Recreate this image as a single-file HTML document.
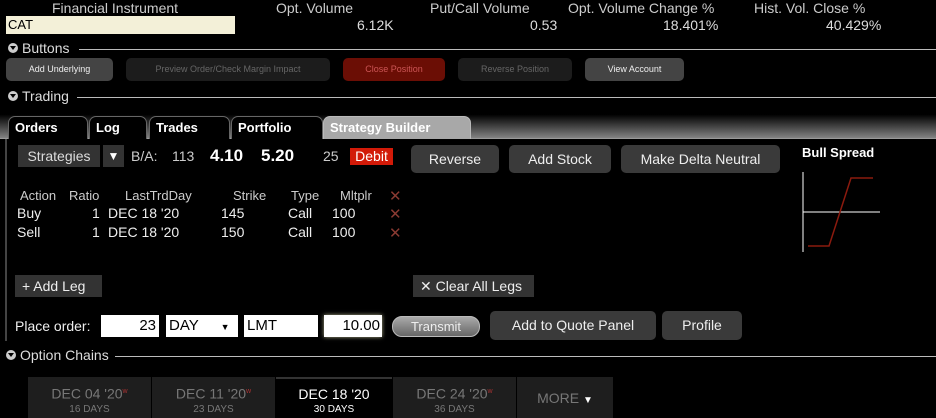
<!DOCTYPE html>
<html><head><style>
*{margin:0;padding:0;box-sizing:border-box}
body{width:936px;height:418px;background:#000;color:#ddd;font-family:"Liberation Sans","DejaVu Sans",sans-serif;position:relative;overflow:hidden}
.a{position:absolute;white-space:nowrap}
.hdr{font-size:14px;color:#ccc;top:0}
.val{font-size:14px;color:#ddd;top:17px}
.sec{font-size:14px;color:#ddd}
.tri{display:inline-block;width:10px;height:10px;border-radius:5px;background:#ccc;position:relative;top:0;margin-right:4px}
.tri:after{content:"";position:absolute;left:2px;top:3px;border-left:3px solid transparent;border-right:3px solid transparent;border-top:4px solid #000}
.line{position:absolute;height:1px;background:#bbb}
.sb{position:absolute;top:58px;height:23px;border-radius:5px;font-size:9px;text-align:center;line-height:23px}
.tab{position:absolute;top:116px;height:23px;border:1px solid #666;border-bottom:none;border-radius:7px 7px 0 0;background:#000;color:#fff;font-weight:bold;font-size:13px;padding-left:6px;line-height:22px}
.btn{position:absolute;background:#3a3a3a;border-radius:5px;color:#eee;font-size:14px;text-align:center}
.hd{font-size:13px;color:#ccc}
.row{font-size:14px;color:#eee}
.x{color:#8a3a32;font-weight:bold;font-size:15px}
.inp{position:absolute;background:#fff;color:#000;font-size:15px;height:22px;line-height:22px;top:315px}
.ct{position:absolute;top:377px;height:41px;background:#1e1e1e;text-align:center;color:#777;font-size:14px;padding-top:8px;line-height:14px}
.ct small{font-size:10px;display:block;margin-top:2px}
.ct sup{color:#a33;font-size:7px}
</style></head><body>
<div class="a hdr" style="left:52px">Financial Instrument</div>
<div class="a hdr" style="left:276px">Opt. Volume</div>
<div class="a hdr" style="left:430px">Put/Call Volume</div>
<div class="a hdr" style="left:568px">Opt. Volume Change %</div>
<div class="a hdr" style="left:754px">Hist. Vol. Close %</div>
<div class="a" style="left:6px;top:16px;width:229px;height:18px;background:#f3f0d8;color:#000;font-size:13px;padding-left:2px;line-height:18px">CAT</div>
<div class="a val" style="left:357px">6.12K</div>
<div class="a val" style="left:530px">0.53</div>
<div class="a val" style="left:663px">18.401%</div>
<div class="a val" style="left:826px">40.429%</div>

<div class="a sec" style="left:8px;top:40px"><span class="tri"></span>Buttons</div>
<div class="line" style="left:79px;right:0;top:49px"></div>
<div class="sb" style="left:6px;width:107px;background:#444;color:#eee">Add Underlying</div>
<div class="sb" style="left:126px;width:204px;background:#1c1c1c;color:#666">Preview Order/Check Margin Impact</div>
<div class="sb" style="left:343px;width:102px;background:#6b0e05;color:#c55">Close Position</div>
<div class="sb" style="left:458px;width:114px;background:#1c1c1c;color:#666">Reverse Position</div>
<div class="sb" style="left:585px;width:99px;background:#444;color:#eee">View Account</div>

<div class="a sec" style="left:8px;top:88px"><span class="tri"></span>Trading</div>
<div class="line" style="left:77px;right:0;top:97px"></div>
<div class="a" style="left:0;right:0;top:104px;height:35px;background:linear-gradient(#000,#000 30%,#888)"></div>
<div class="a" style="left:0;right:0;top:138px;height:1px;background:#999"></div>
<div class="tab" style="left:8px;width:80px">Orders</div>
<div class="tab" style="left:89px;width:58px">Log</div>
<div class="tab" style="left:149px;width:81px">Trades</div>
<div class="tab" style="left:231px;width:92px">Portfolio</div>
<div class="tab" style="left:323px;width:148px;background:#a8a8a8;border-color:#bbb">Strategy Builder</div>
<div class="a" style="left:5px;top:139px;width:2px;height:202px;background:#444"></div>

<div class="a" style="left:18px;top:145px;width:82px;height:22px;background:#333;color:#ddd;font-size:14px;line-height:22px;text-align:center">Strategies</div>
<div class="a" style="left:103px;top:145px;width:21px;height:22px;background:#333;color:#fff;font-size:12px;line-height:22px;text-align:center">▼</div>
<div class="a" style="left:131px;top:148px;font-size:14px;color:#ccc">B/A:</div>
<div class="a" style="left:172px;top:148px;font-size:14px;color:#ccc">113</div>
<div class="a" style="left:210px;top:146px;font-size:17px;color:#fff;font-weight:bold">4.10</div>
<div class="a" style="left:261px;top:146px;font-size:17px;color:#fff;font-weight:bold">5.20</div>
<div class="a" style="left:323px;top:148px;font-size:14px;color:#ccc">25</div>
<div class="a" style="left:350px;top:148px;width:43px;height:17px;background:#d21a08;color:#fff;font-size:14px;line-height:17px;text-align:center">Debit</div>
<div class="btn" style="left:411px;top:145px;width:88px;height:28px;line-height:28px">Reverse</div>
<div class="btn" style="left:509px;top:145px;width:102px;height:28px;line-height:28px">Add Stock</div>
<div class="btn" style="left:621px;top:145px;width:159px;height:28px;line-height:28px">Make Delta Neutral</div>
<div class="a" style="left:802px;top:145px;font-size:13px;font-weight:bold;color:#fff">Bull Spread</div>
<svg class="a" style="left:800px;top:170px" width="82" height="84"><line x1="3" y1="2" x2="3" y2="82" stroke="#fff" stroke-width="1"/><line x1="3" y1="42" x2="80" y2="42" stroke="#fff"/><polyline points="8,76 29,76 51,8 73,8" fill="none" stroke="#8b1a0e" stroke-width="1.5"/></svg>

<div class="a hd" style="left:20px;top:188px">Action</div>
<div class="a hd" style="left:69px;top:188px">Ratio</div>
<div class="a hd" style="left:125px;top:188px">LastTrdDay</div>
<div class="a hd" style="left:233px;top:188px">Strike</div>
<div class="a hd" style="left:291px;top:188px">Type</div>
<div class="a hd" style="left:340px;top:188px">Mltplr</div>
<div class="a x" style="left:389px;top:187px">✕</div>
<div class="a row" style="left:17px;top:205px">Buy</div><div class="a row" style="left:92px;top:205px">1</div><div class="a row" style="left:108px;top:205px">DEC 18 '20</div><div class="a row" style="left:221px;top:205px">145</div><div class="a row" style="left:288px;top:205px">Call</div><div class="a row" style="left:332px;top:205px">100</div><div class="a x" style="left:389px;top:205px">✕</div>
<div class="a row" style="left:17px;top:224px">Sell</div><div class="a row" style="left:92px;top:224px">1</div><div class="a row" style="left:108px;top:224px">DEC 18 '20</div><div class="a row" style="left:221px;top:224px">150</div><div class="a row" style="left:288px;top:224px">Call</div><div class="a row" style="left:332px;top:224px">100</div><div class="a x" style="left:389px;top:224px">✕</div>

<div class="a" style="left:15px;top:275px;width:87px;height:22px;background:#333;color:#eee;font-size:14px;line-height:22px;padding-left:7px">+ Add Leg</div>
<div class="a" style="left:413px;top:275px;width:121px;height:22px;background:#333;color:#eee;font-size:14px;line-height:22px;padding-left:7px">✕ Clear All Legs</div>

<div class="a" style="left:15px;top:318px;font-size:14px;color:#eee">Place order:</div>
<div class="inp" style="left:101px;width:58px;text-align:right;padding-right:3px">23</div>
<div class="inp" style="left:166px;width:72px;padding-left:3px">DAY <span style="font-size:9px;margin-left:18px">▼</span></div>
<div class="inp" style="left:244px;width:74px;padding-left:3px">LMT</div>
<div class="inp" style="left:324px;width:58px;text-align:right;padding-right:2px;box-shadow:0 0 4px #aa8">10.00</div>
<div class="a" style="left:392px;top:316px;width:88px;height:21px;border-radius:10px;background:linear-gradient(#aaa,#666);border:1px solid #bbb;color:#eee;font-size:13px;text-align:center;line-height:19px">Transmit</div>
<div class="btn" style="left:490px;top:311px;width:166px;height:29px;line-height:29px">Add to Quote Panel</div>
<div class="btn" style="left:662px;top:311px;width:80px;height:29px;line-height:29px">Profile</div>

<div class="a sec" style="left:6px;top:347px"><span class="tri"></span>Option Chains</div>
<div class="line" style="left:115px;right:0;top:356px"></div>
<div class="ct" style="left:28px;width:123px">DEC 04 '20<sup>w</sup><small>16 DAYS</small></div>
<div class="ct" style="left:152px;width:123px">DEC 11 '20<sup>w</sup><small>23 DAYS</small></div>
<div class="ct" style="left:276px;width:116px;background:#000;border-top:2px solid #333;color:#fff">DEC 18 '20<small>30 DAYS</small></div>
<div class="ct" style="left:393px;width:123px">DEC 24 '20<sup>w</sup><small>36 DAYS</small></div>
<div class="ct" style="left:517px;width:96px;padding-top:14px">MORE <span style="color:#fff;font-size:10px">▼</span></div>
</body></html>
